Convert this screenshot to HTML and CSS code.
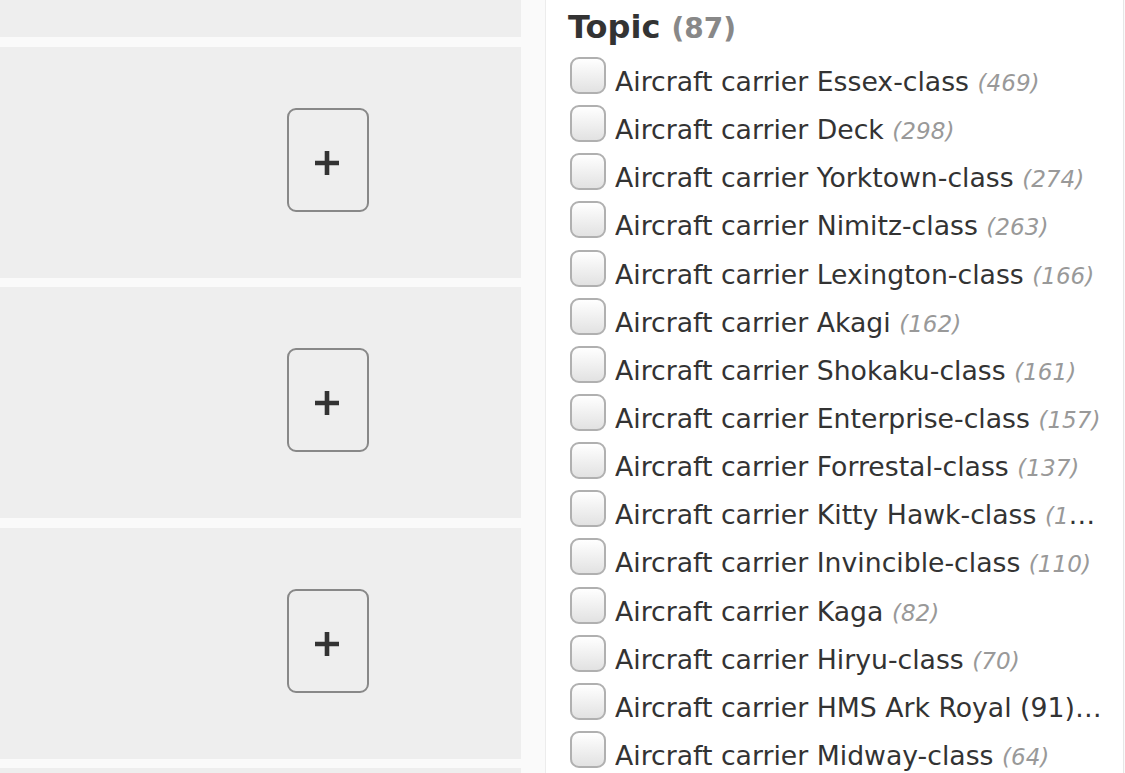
FILE: index.html
```html
<!DOCTYPE html>
<html lang="en">
<head>
<meta charset="utf-8">
<title>Topic filter</title>
<link rel="stylesheet" href="styles.css">
</head>
<body>
<div class="page">
  <div class="cards">
    <div class="card"><button class="add" type="button" aria-label="Add"><svg viewBox="0 0 24 24" width="24" height="24"><path d="M12 0v24M0 12h24" stroke="#333" stroke-width="4.6" fill="none"/></svg></button></div>
    <div class="card"><button class="add" type="button" aria-label="Add"><svg viewBox="0 0 24 24" width="24" height="24"><path d="M12 0v24M0 12h24" stroke="#333" stroke-width="4.6" fill="none"/></svg></button></div>
    <div class="card"><button class="add" type="button" aria-label="Add"><svg viewBox="0 0 24 24" width="24" height="24"><path d="M12 0v24M0 12h24" stroke="#333" stroke-width="4.6" fill="none"/></svg></button></div>
    <div class="card"><button class="add" type="button" aria-label="Add"><svg viewBox="0 0 24 24" width="24" height="24"><path d="M12 0v24M0 12h24" stroke="#333" stroke-width="4.6" fill="none"/></svg></button></div>
    <div class="card"></div>
  </div>
  <aside class="facet">
    <h2 class="facet-title">Topic <span class="facet-total">(87)</span></h2>
    <ul class="facet-list">
      <li class="facet-row"><span class="box"></span><span class="label">Aircraft carrier Essex-class <em class="count">(469)</em></span></li>
      <li class="facet-row"><span class="box"></span><span class="label">Aircraft carrier Deck <em class="count">(298)</em></span></li>
      <li class="facet-row"><span class="box"></span><span class="label">Aircraft carrier Yorktown-class <em class="count">(274)</em></span></li>
      <li class="facet-row"><span class="box"></span><span class="label">Aircraft carrier Nimitz-class <em class="count">(263)</em></span></li>
      <li class="facet-row"><span class="box"></span><span class="label">Aircraft carrier Lexington-class <em class="count">(166)</em></span></li>
      <li class="facet-row"><span class="box"></span><span class="label">Aircraft carrier Akagi <em class="count">(162)</em></span></li>
      <li class="facet-row"><span class="box"></span><span class="label">Aircraft carrier Shokaku-class <em class="count">(161)</em></span></li>
      <li class="facet-row"><span class="box"></span><span class="label">Aircraft carrier Enterprise-class <em class="count">(157)</em></span></li>
      <li class="facet-row"><span class="box"></span><span class="label">Aircraft carrier Forrestal-class <em class="count">(137)</em></span></li>
      <li class="facet-row"><span class="box"></span><span class="label">Aircraft carrier Kitty Hawk-class <em class="count">(115)</em></span></li>
      <li class="facet-row"><span class="box"></span><span class="label">Aircraft carrier Invincible-class <em class="count">(110)</em></span></li>
      <li class="facet-row"><span class="box"></span><span class="label">Aircraft carrier Kaga <em class="count">(82)</em></span></li>
      <li class="facet-row"><span class="box"></span><span class="label">Aircraft carrier Hiryu-class <em class="count">(70)</em></span></li>
      <li class="facet-row"><span class="box"></span><span class="label">Aircraft carrier HMS Ark Royal (91)<em class="count"> (67)</em></span></li>
      <li class="facet-row"><span class="box"></span><span class="label">Aircraft carrier Midway-class <em class="count">(64)</em></span></li>
    </ul>
  </aside>
</div>
</body>
</html>
```

FILE: styles.css
```css
html, body {
  margin: 0;
  padding: 0;
  height: 100%;
  overflow: hidden;
  background: #fafafa;
}

.page {
  display: flex;
  align-items: stretch;
  height: 773px;
  overflow: hidden;
}

.cards {
  width: 521px;
  flex: none;
  display: flex;
  flex-direction: column;
  gap: 9.5px;
  margin-top: -194px;
}

.card {
  height: 231px;
  flex: none;
  background: #eeeeee;
  display: flex;
  align-items: flex-start;
  padding: 61px 0 0 287px;
  box-sizing: border-box;
}

.add {
  width: 82px;
  height: 104px;
  box-sizing: border-box;
  border: 2px solid #888888;
  border-radius: 9px;
  background: transparent;
  display: flex;
  align-items: center;
  justify-content: center;
  padding: 6px 2px 0 0;
  margin: 0;
}

.add svg {
  display: block;
}

.facet {
  margin-left: 24px;
  width: 579px;
  flex: none;
  box-sizing: border-box;
  background: #ffffff;
  border-left: 1px solid #ececec;
  border-right: 1px solid #e6e6e6;
  padding: 0 17px 0 22px;
  font-family: "DejaVu Sans", Verdana, sans-serif;
  color: #333333;
}

.facet-title {
  margin: 0;
  height: 57px;
  font-size: 32px;
  line-height: 54px;
  font-weight: bold;
  color: #333333;
}

.facet-total {
  font-size: 28px;
  color: #888888;
}

.facet-list {
  list-style: none;
  margin: 0;
  padding: 0 0 0 2px;
}

.facet-row {
  display: flex;
  align-items: flex-start;
  height: 48.15px;
}

.box {
  flex: none;
  width: 36px;
  height: 37px;
  box-sizing: border-box;
  border: 2px solid #b0b0b0;
  border-radius: 9px;
  background: linear-gradient(#ffffff, #e2e2e2);
  margin-right: 9px;
}

.label {
  flex: 1;
  min-width: 0;
  white-space: nowrap;
  overflow: hidden;
  text-overflow: ellipsis;
  font-size: 26.7px;
  line-height: 46px;
  padding-top: 2px;
}

.count {
  font-size: 23.1px;
  color: #999999;
}
```
